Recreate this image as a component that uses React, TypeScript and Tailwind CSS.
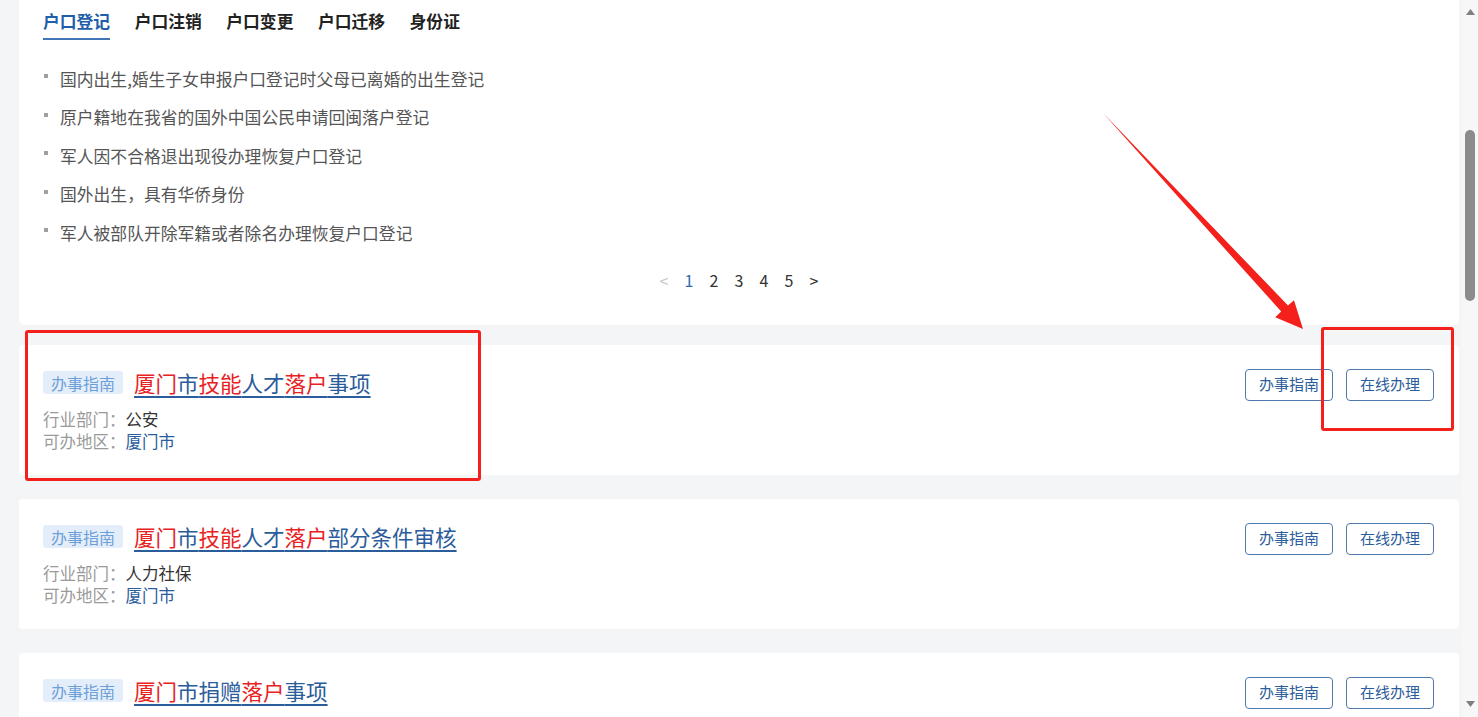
import React from "react";

const FONT = '"Noto Sans CJK SC", "Noto Sans", "Liberation Sans", sans-serif';

type Seg = { t: string; red?: boolean };

const items: { title: Seg[]; dept: string; region: string }[] = [
  {
    title: [
      { t: "厦门", red: true },
      { t: "市" },
      { t: "技能", red: true },
      { t: "人才" },
      { t: "落户", red: true },
      { t: "事项" },
    ],
    dept: "公安",
    region: "厦门市",
  },
  {
    title: [
      { t: "厦门", red: true },
      { t: "市" },
      { t: "技能", red: true },
      { t: "人才" },
      { t: "落户", red: true },
      { t: "部分条件审核" },
    ],
    dept: "人力社保",
    region: "厦门市",
  },
  {
    title: [
      { t: "厦门", red: true },
      { t: "市捐赠" },
      { t: "落户", red: true },
      { t: "事项" },
    ],
    dept: "公安",
    region: "厦门市",
  },
];

const tabs = ["户口登记", "户口注销", "户口变更", "户口迁移", "身份证"];
const list = [
  "国内出生,婚生子女申报户口登记时父母已离婚的出生登记",
  "原户籍地在我省的国外中国公民申请回闽落户登记",
  "军人因不合格退出现役办理恢复户口登记",
  "国外出生，具有华侨身份",
  "军人被部队开除军籍或者除名办理恢复户口登记",
];

function ItemCard({ item }: { item: (typeof items)[number] }) {
  return (
    <div className="flex h-[130px] shrink-0 justify-between rounded-[4px] bg-white pl-6 pr-[25px]">
      <div className="flex flex-col pt-[22px]">
        <div className="flex h-8 items-center">
          <span className="flex h-[23px] items-center rounded-[3px] bg-[#e4eefa] px-[8px] text-[16px] text-[#6d9fd9]">
            办事指南
          </span>
          <a className="ml-[11px] text-[21.5px] leading-none text-[#2b5c9b] underline decoration-[#2b5c9b] decoration-[1.5px] underline-offset-[4px]">
            {item.title.map((s, i) => (
              <span key={i} className={s.red ? "text-[#e8221f]" : "text-[#2b5c9b]"}>
                {s.t}
              </span>
            ))}
          </a>
        </div>
        <div className="mt-[9px] flex flex-col text-[16.5px] leading-[22px]">
          <div>
            <span className="text-[#9a9a9a]">行业部门：</span>
            <span className="text-[#333]">{item.dept}</span>
          </div>
          <div>
            <span className="text-[#9a9a9a]">可办地区：</span>
            <span className="text-[#2b5c9b]">{item.region}</span>
          </div>
        </div>
      </div>
      <div className="flex gap-[13px] pt-6">
        <button className="flex h-8 w-[88px] items-center justify-center rounded-[4px] border border-[#5079ae] text-[15px] text-[#2b5c9b]">
          办事指南
        </button>
        <button className="flex h-8 w-[88px] items-center justify-center rounded-[4px] border border-[#5079ae] text-[15px] text-[#2b5c9b]">
          在线办理
        </button>
      </div>
    </div>
  );
}

export default function App() {
  return (
    <div
      className="relative h-[717px] w-[1478px] overflow-hidden bg-[#f4f5f6]"
      style={{ fontFamily: FONT }}
    >
      <div className="ml-[19px] flex w-[1440px] flex-col">
        {/* top card */}
        <div className="rounded-b-[6px] bg-white px-6 pb-[33px] pt-[9px]">
          <div className="flex gap-[24.5px]">
            {tabs.map((t, i) => (
              <div
                key={t}
                className={
                  i === 0
                    ? "border-b-2 border-[#3f76b8] pb-[5px] text-[16.8px] font-bold leading-[24px] text-[#1f5ea8]"
                    : "pb-[7px] text-[16.8px] font-bold leading-[24px] text-[#222]"
                }
              >
                {t}
              </div>
            ))}
          </div>
          <ul className="mt-[20px] flex flex-col">
            {list.map((t) => (
              <li key={t} className="flex h-[38.5px] items-center text-[16.8px] text-[#555]">
                <span className="ml-[1px] mr-[12px] h-[4px] w-[4px] -translate-y-[3px] bg-[#a0a0a0]" />
                {t}
              </li>
            ))}
          </ul>
          <div className="mt-[15px] flex h-6 items-center justify-center text-[16px]">
            <span className="w-[25px] text-center text-[#c8c8c8]">&lt;</span>
            <span className="w-[25px] text-center text-[#2b6cb0]">1</span>
            <span className="w-[25px] text-center text-[#333]">2</span>
            <span className="w-[25px] text-center text-[#333]">3</span>
            <span className="w-[25px] text-center text-[#333]">4</span>
            <span className="w-[25px] text-center text-[#333]">5</span>
            <span className="w-[25px] text-center text-[#333]">&gt;</span>
          </div>
        </div>

        <div className="mt-[20px] flex flex-col gap-6">
          {items.map((it, i) => (
            <ItemCard key={i} item={it} />
          ))}
        </div>
      </div>

      {/* scrollbar */}
      <div className="absolute right-0 top-0 h-full w-[16px] bg-[#f7f7f7]">
        <svg className="absolute left-[4px] top-[9px]" width="9" height="6" viewBox="0 0 9 6">
          <path d="M4.5 0 L9 6 L0 6 Z" fill="#7f7f7f" />
        </svg>
        <div className="absolute left-[3px] top-[130px] h-[171px] w-[10px] rounded-full bg-[#8b8b8b]" />
        <svg className="absolute bottom-[10px] left-[4px]" width="9" height="6" viewBox="0 0 9 6">
          <path d="M0 0 L9 0 L4.5 6 Z" fill="#7f7f7f" />
        </svg>
      </div>

      {/* red annotations */}
      <div className="absolute left-[25px] top-[330px] h-[151px] w-[456px] rounded-[3px] border-[3px] border-[#f4201c]" />
      <div className="absolute left-[1321px] top-[327px] h-[104px] w-[133px] rounded-[3px] border-[3px] border-[#f4201c]" />
      <svg className="pointer-events-none absolute left-0 top-0" width="1478" height="717">
        <polygon
          points="1103,113 1288,305.5 1294,300.2 1303,329 1275.2,317.2 1281.2,311.6"
          fill="#f4201c"
        />
      </svg>
    </div>
  );
}
